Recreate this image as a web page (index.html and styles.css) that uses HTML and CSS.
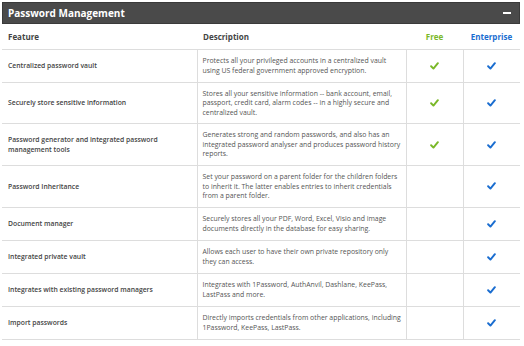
FILE: index.html
```html
<!DOCTYPE html>
<html lang="en">
<head>
    <meta charset="UTF-8">
    <title>Password Management</title>
    <link rel="stylesheet" href="styles.css">
</head>
<body>
    <div class="panel">
        <div class="panel-header">
            <span class="panel-title">Password Management</span>
            <span class="collapse-icon"></span>
        </div>

        <table class="compare">
            <colgroup>
                <col class="col-feature">
                <col class="col-desc">
                <col class="col-plan">
                <col class="col-plan">
            </colgroup>
            <thead>
                <tr>
                    <th>Feature</th>
                    <th>Description</th>
                    <th class="plan free">Free</th>
                    <th class="plan enterprise">Enterprise</th>
                </tr>
            </thead>
            <tbody>
                <tr>
                    <td class="feature">Centralized password vault</td>
                    <td class="desc">Protects all your privileged accounts in a centralized vault using US federal government approved encryption.</td>
                    <td class="check green"></td>
                    <td class="check blue"></td>
                </tr>
                <tr>
                    <td class="feature">Securely store sensitive information</td>
                    <td class="desc">Stores all your sensitive information -- bank account, email, passport, credit card, alarm codes -- in a highly secure and centralized vault.</td>
                    <td class="check green"></td>
                    <td class="check blue"></td>
                </tr>
                <tr>
                    <td class="feature">Password generator and integrated password management tools</td>
                    <td class="desc">Generates strong and random passwords, and also has an integrated password analyser and produces password history reports.</td>
                    <td class="check green"></td>
                    <td class="check blue"></td>
                </tr>
                <tr>
                    <td class="feature">Password Inheritance</td>
                    <td class="desc">Set your password on a parent folder for the children folders to inherit it. The latter enables entries to inherit credentials from a parent folder.</td>
                    <td></td>
                    <td class="check blue"></td>
                </tr>
                <tr>
                    <td class="feature">Document manager</td>
                    <td class="desc">Securely stores all your PDF, Word, Excel, Visio and image documents directly in the database for easy sharing.</td>
                    <td></td>
                    <td class="check blue"></td>
                </tr>
                <tr>
                    <td class="feature">Integrated private vault</td>
                    <td class="desc">Allows each user to have their own private repository only they can access.</td>
                    <td></td>
                    <td class="check blue"></td>
                </tr>
                <tr>
                    <td class="feature">Integrates with existing password managers</td>
                    <td class="desc">Integrates with 1Password, AuthAnvil, Dashlane, KeePass, LastPass and more.</td>
                    <td></td>
                    <td class="check blue"></td>
                </tr>
                <tr>
                    <td class="feature">Import passwords</td>
                    <td class="desc">Directly imports credentials from other applications, including 1Password, KeePass, LastPass.</td>
                    <td></td>
                    <td class="check blue"></td>
                </tr>
            </tbody>
        </table>
    </div>
</body>
</html>
```

FILE: styles.css
```css
* {
    margin: 0;
    padding: 0;
    box-sizing: border-box;
}

body {
    font-family: "Open Sans", "Liberation Sans", sans-serif;
    background: #fff;
    color: #555;
    padding: 2px 4px 0 2px;
}

.panel {
    width: 518px;
}

.panel-header {
    height: 22px;
    background: #4a4a4a;
    border: 1px solid #3a3a3a;
    display: flex;
    align-items: center;
    justify-content: space-between;
    padding: 0 8px 0 5px;
}

.panel-title {
    color: #fff;
    font-size: 10px;
    font-weight: 700;
}

.collapse-icon {
    width: 8px;
    height: 1.5px;
    background: #fff;
}

.compare {
    width: 518px;
    border-collapse: collapse;
    table-layout: fixed;
}

.col-feature {
    width: 195px;
}

.col-desc {
    width: 209px;
}

.col-plan {
    width: 57px;
}

.compare th {
    height: 25px;
    font-size: 8px;
    font-weight: 700;
    color: #444;
    text-align: left;
    padding: 0 6px;
    border-bottom: 1px solid #ddd;
}

.compare th.plan {
    text-align: center;
}

.compare th.free {
    color: #7ab828;
}

.compare th.enterprise {
    color: #1a6dd0;
}

.compare td {
    font-size: 6.9px;
    line-height: 9.6px;
    padding: 0 6px;
    border-bottom: 1px solid #ddd;
    vertical-align: middle;
}

.compare tbody tr {
    height: 33px;
}

.compare td + td {
    border-left: 1px solid #ddd;
}

.compare td.feature {
    font-size: 6.8px;
    font-weight: 600;
    color: #444;
}

.compare td.desc {
    padding: 6px 3px 6px 5px;
}

.check {
    background-position: center;
    background-repeat: no-repeat;
    background-size: 9px 8px;
}

.check.green {
    background-image: url("data:image/svg+xml,%3Csvg xmlns='http://www.w3.org/2000/svg' viewBox='0 0 10 9'%3E%3Cpath d='M1.2 4.8 L3.8 7.4 L8.8 1.4' fill='none' stroke='%237ab828' stroke-width='2.2' stroke-linecap='round' stroke-linejoin='round'/%3E%3C/svg%3E");
}

.check.blue {
    background-image: url("data:image/svg+xml,%3Csvg xmlns='http://www.w3.org/2000/svg' viewBox='0 0 10 9'%3E%3Cpath d='M1.2 4.8 L3.8 7.4 L8.8 1.4' fill='none' stroke='%231a6dd0' stroke-width='2.2' stroke-linecap='round' stroke-linejoin='round'/%3E%3C/svg%3E");
}
```
